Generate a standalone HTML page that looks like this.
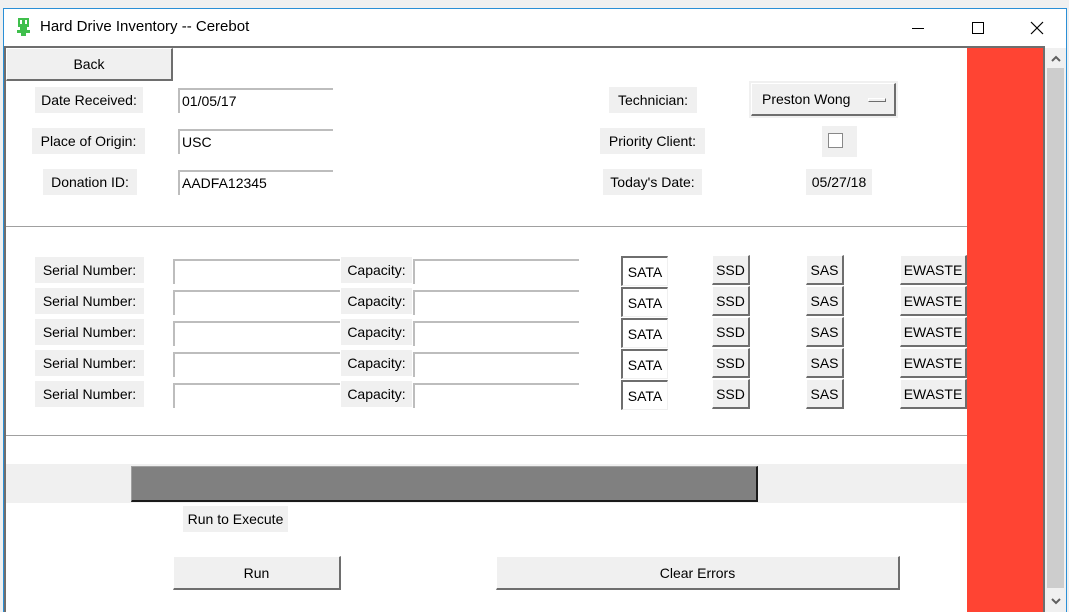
<!DOCTYPE html>
<html><head><style>
*{margin:0;padding:0;box-sizing:border-box}
body{width:1069px;height:612px;background:#f0f0f0;position:relative;overflow:hidden;font-family:"Liberation Sans","DejaVu Sans",sans-serif;font-size:14px;color:#000}
.a{position:absolute}
.lbl{position:absolute;background:#f0f0f0;display:flex;align-items:center;justify-content:center;height:26px;white-space:nowrap}
.ent{position:absolute;height:25px;border-top:2px solid #bdbdbd;border-left:2px solid #bdbdbd;background:#fff;padding-left:2px;line-height:22px}
.btnr{position:absolute;background:#f0f0f0;border-top:1px solid #fff;border-left:1px solid #fff;border-right:2px solid #6e6e6e;border-bottom:2px solid #6e6e6e;display:flex;align-items:center;justify-content:center}
.btns{position:absolute;background:#fff;border-top:2px solid #6e6e6e;border-left:2px solid #6e6e6e;border-right:1px solid #f0f0f0;border-bottom:1px solid #f0f0f0;display:flex;align-items:center;justify-content:center}
.hl{position:absolute;left:6px;width:961px;height:2px;border-top:1px solid #a0a0a0;border-bottom:1px solid #fff}
</style></head><body>
<div class="a" style="left:3px;top:8px;width:1064px;height:604px;background:#fff;border:1px solid #2b8fd6;border-bottom:none"></div>
<svg class="a" style="left:16px;top:17px" width="16" height="20" viewBox="0 0 16 20"><rect x="2" y="1" width="11" height="9" fill="#3fbf4c"/><rect x="4" y="3" width="2" height="4" fill="#fff"/><rect x="9" y="3" width="2" height="4" fill="#fff"/><rect x="4" y="10" width="7" height="3" fill="#3fbf4c"/><rect x="1" y="13" width="13" height="3" fill="#3fbf4c"/><rect x="5" y="16" width="5" height="3" fill="#3fbf4c"/></svg>
<div class="a" style="left:40px;top:18px;font-size:15px">Hard Drive Inventory -- Cerebot</div>
<div class="a" style="left:912px;top:28px;width:12px;height:1px;background:#000"></div>
<div class="a" style="left:972px;top:22px;width:12px;height:12px;border:1px solid #000"></div>
<svg class="a" style="left:1030px;top:21px" width="14" height="14"><path d="M1 1L13 13M13 1L1 13" stroke="#000" stroke-width="1.2"/></svg>
<div class="a" style="left:4px;top:46px;width:1041px;height:566px;border-top:2px solid #6e6e6e;border-left:2px solid #6e6e6e;border-right:2px solid #6e6e6e;background:#fff"></div>
<div class="a" style="left:967px;top:48px;width:76px;height:564px;background:#ff4433"></div>
<div class="a" style="left:1045px;top:48px;width:21px;height:564px;background:#f0f0f0"></div>
<div class="a" style="left:1047px;top:68px;width:17px;height:520px;background:#cdcdcd"></div>
<svg class="a" style="left:1050px;top:54px" width="12" height="10"><path d="M2 7L6 3L10 7" stroke="#606060" stroke-width="2" fill="none"/></svg>
<svg class="a" style="left:1050px;top:596px" width="12" height="10"><path d="M2 3L6 7L10 3" stroke="#606060" stroke-width="2" fill="none"/></svg>
<div class="btnr" style="left:6px;top:48px;width:167px;height:33px">Back</div>
<div class="lbl" style="left:35px;top:87px;width:108px">Date Received:</div>
<div class="lbl" style="left:32px;top:128px;width:113px">Place of Origin:</div>
<div class="lbl" style="left:43px;top:169px;width:94px">Donation ID:</div>
<div class="ent" style="left:178px;top:88px;width:155px">01/05/17</div>
<div class="ent" style="left:178px;top:129px;width:155px">USC</div>
<div class="ent" style="left:178px;top:170px;width:155px">AADFA12345</div>
<div class="lbl" style="left:609px;top:87px;width:88px">Technician:</div>
<div class="lbl" style="left:600px;top:128px;width:105px">Priority Client:</div>
<div class="lbl" style="left:603px;top:169px;width:99px">Today's Date:</div>
<div class="a" style="left:749px;top:81px;width:149px;height:37px;background:#f0f0f0"></div>
<div class="btnr" style="left:751px;top:83px;width:145px;height:33px;justify-content:flex-start;padding-left:10px">Preston Wong<span class="a" style="left:116px;top:14px;width:18px;height:4px;border-top:1px solid #fff;border-left:1px solid #fff;border-right:1px solid #6e6e6e;border-bottom:1px solid #6e6e6e"></span></div>
<div class="a" style="left:822px;top:126px;width:35px;height:31px;background:#f0f0f0"></div>
<div class="a" style="left:828px;top:133px;width:15px;height:15px;background:#fff;border:1px solid #888"></div>
<div class="lbl" style="left:806px;top:169px;width:66px">05/27/18</div>
<div class="hl" style="top:226px"></div>
<div id="rows"></div>
<div class="hl" style="top:435px"></div>
<div class="a" style="left:6px;top:464px;width:961px;height:39px;background:#f0f0f0"></div>
<div class="a" style="left:131px;top:466px;width:627px;height:36px;background:#808080;border-right:2px solid #1a1a1a;border-bottom:2px solid #1a1a1a;border-top:1px solid #a0a0a0;border-left:1px solid #a0a0a0"></div>
<div class="lbl" style="left:183px;top:506px;width:105px">Run to Execute</div>
<div class="btnr" style="left:173px;top:556px;width:168px;height:34px">Run</div>
<div class="btnr" style="left:496px;top:556px;width:404px;height:34px">Clear Errors</div>
<script>
var h='';
for(var i=0;i<5;i++){var y=257+i*31;
h+='<div class="lbl" style="left:35px;top:'+y+'px;width:109px">Serial Number:</div>';
h+='<div class="ent" style="left:173px;top:'+(y+2)+'px;width:167px"></div>';
h+='<div class="lbl" style="left:341px;top:'+y+'px;width:71px">Capacity:</div>';
h+='<div class="ent" style="left:413px;top:'+(y+2)+'px;width:166px"></div>';
h+='<div class="btns" style="left:621px;top:'+(y-1)+'px;width:47px;height:30px">SATA</div>';
h+='<div class="btnr" style="left:712px;top:'+(y-2)+'px;width:38px;height:30px">SSD</div>';
h+='<div class="btnr" style="left:806px;top:'+(y-2)+'px;width:38px;height:30px">SAS</div>';
h+='<div class="btnr" style="left:900px;top:'+(y-2)+'px;width:67px;height:30px">EWASTE</div>';}
document.getElementById('rows').innerHTML=h;
</script>
</body></html>
